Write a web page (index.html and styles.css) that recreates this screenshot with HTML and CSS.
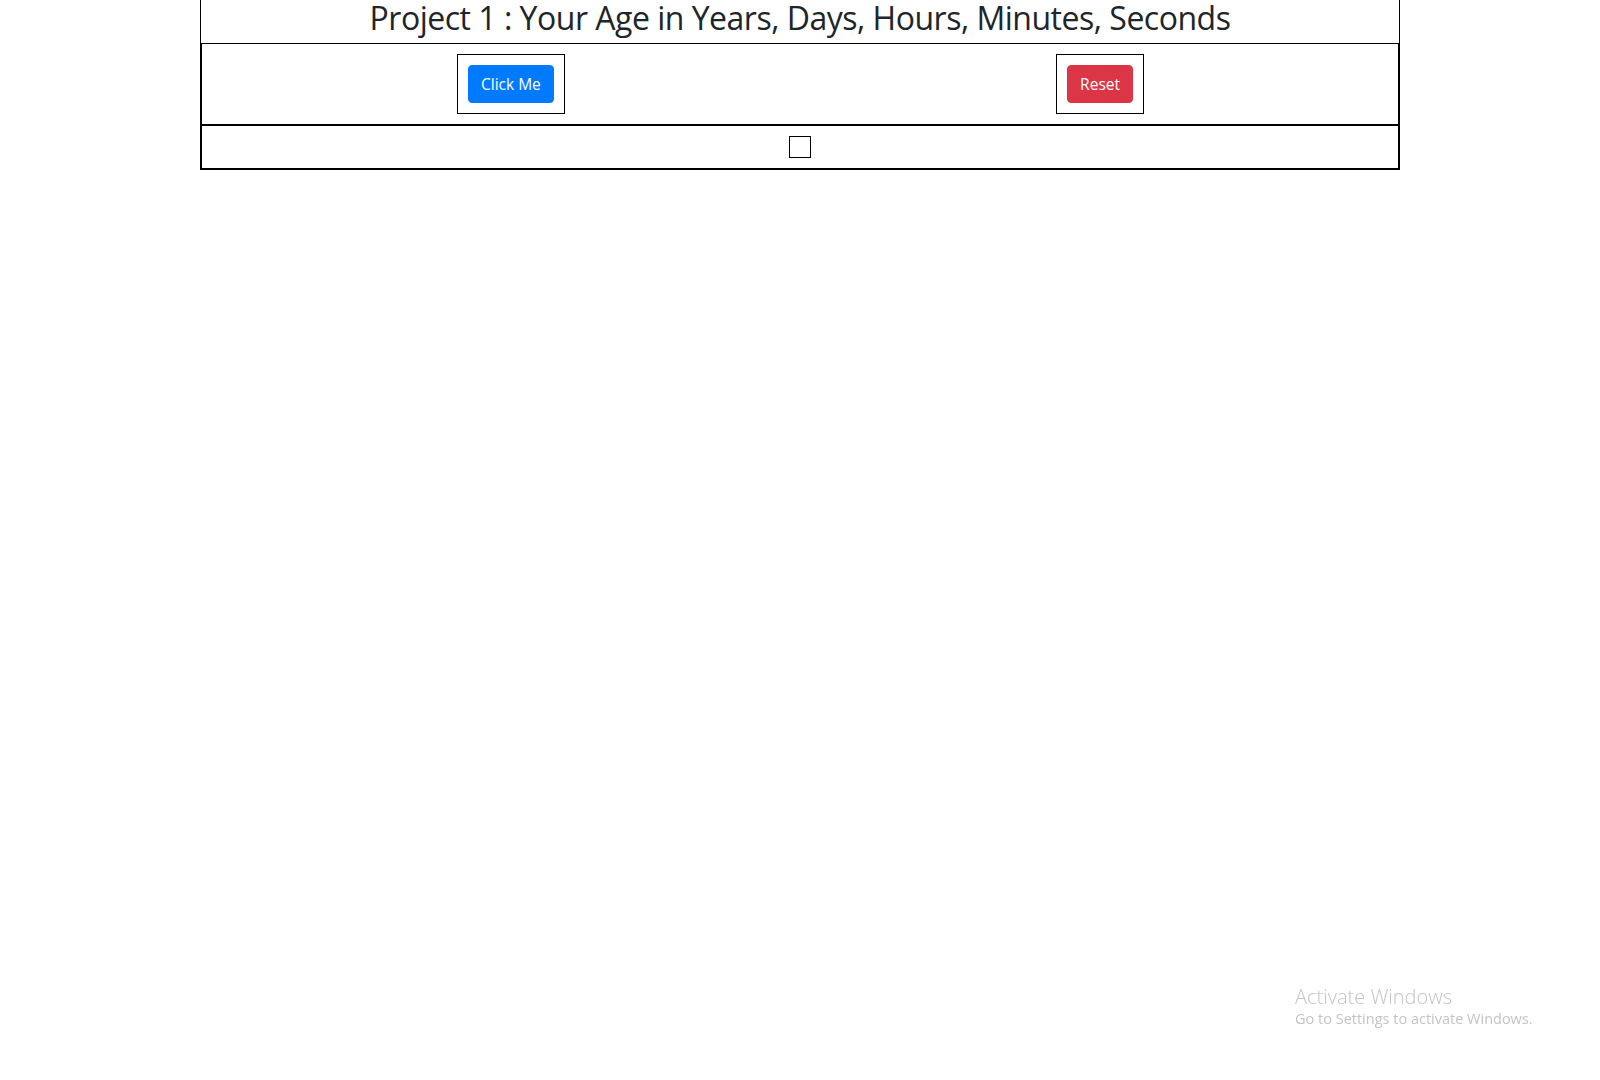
FILE: index.html
```html
<!DOCTYPE html>
<html lang="en">
<head>
<meta charset="utf-8">
<title>Your Age</title>
<link rel="stylesheet" href="styles.css">
</head>
<body>
<div class="container">
  <h2 class="title">Project 1 : Your Age in Years, Days, Hours, Minutes, Seconds</h2>
  <div class="row-buttons">
    <div class="box"><button class="btn btn-primary" type="button">Click Me</button></div>
    <div class="box"><button class="btn btn-danger" type="button">Reset</button></div>
  </div>
  <div class="row-result">
    <div class="box box-empty"></div>
  </div>
</div>
<div class="watermark">
  <div class="wm-title">Activate Windows</div>
  <div class="wm-sub">Go to Settings to activate Windows.</div>
</div>
</body>
</html>
```
FILE: styles.css
```css
html, body {
  margin: 0;
  padding: 0;
  background: #fff;
  font-family: "Open Sans", "Noto Sans", "Liberation Sans", sans-serif;
  color: #212529;
}

.container {
  width: 1200px;
  margin: 0 auto;
}

.title {
  margin: 0;
  font-size: 32px;
  font-weight: 500;
  letter-spacing: -0.5px;
  line-height: 36px;
  padding-bottom: 7px;
  text-align: center;
  border-left: 1px solid #000;
  border-right: 1px solid #000;
  border-bottom: 1px solid #000;
  color: #212529;
}

.row-buttons {
  display: flex;
  justify-content: space-between;
  align-items: flex-start;
  padding: 10px 254px 10px 255px;
  border-left: 2px solid #000;
  border-right: 2px solid #000;
  border-bottom: 2px solid #000;
}

.row-result {
  display: flex;
  justify-content: center;
  padding: 10px 0;
  border-left: 2px solid #000;
  border-right: 2px solid #000;
  border-bottom: 2px solid #000;
}

.box {
  border: 1px solid #000;
  padding: 10px;
  display: flex;
}

.box-empty {
  width: 0;
  height: 0;
}

.btn {
  font-family: "Open Sans", "Noto Sans", sans-serif;
  font-size: 15.5px;
  line-height: 24px;
  padding: 6px 12px;
  border: 1px solid transparent;
  border-radius: 4px;
  color: #fff;
  cursor: pointer;
}

.btn-primary {
  background: #007bff;
  border-color: #007bff;
}

.btn-danger {
  background: #dc3545;
  border-color: #dc3545;
}

.watermark {
  position: fixed;
  left: 1295px;
  top: 985px;
  color: #c4c4c4;
  font-family: "Open Sans", "Noto Sans", sans-serif;
  pointer-events: none;
}

.wm-title {
  font-size: 20px;
  font-weight: 300;
  line-height: 24px;
}

.wm-sub {
  font-size: 14.5px;
  line-height: 20px;
}
```
